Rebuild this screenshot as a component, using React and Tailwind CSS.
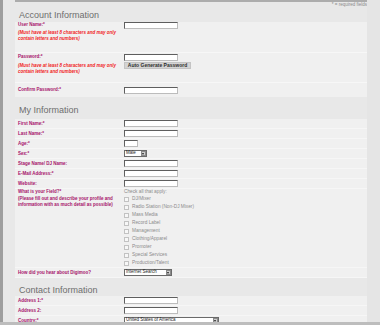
import React from 'react';

const LABEL = 'text-[4.5px] leading-[6px] font-bold text-[#a6106a] whitespace-nowrap';
const NOTE = 'text-[4.5px] leading-[6px] font-bold italic text-[#f01c24]';
const HEADING = 'text-[9px] leading-none text-[#6e6e6e] pl-[4px]';

const fields = [
  'DJ/Mixer',
  'Radio Station (Non-DJ Mixer)',
  'Mass Media',
  'Record Label',
  'Management',
  'Clothing/Apparel',
  'Promoter',
  'Special Services',
  'Production/Talent',
];

function TextBox({ small }) {
  return (
    <div
      className={`${small ? 'w-[14px]' : 'w-[54px]'} h-[7px] shrink-0 bg-white border border-[#5e5e5e] border-b-[#bcbcbc] border-r-[#bcbcbc]`}
    />
  );
}

function Select({ value, w }) {
  return (
    <div className={`${w} h-[7px] shrink-0 bg-white border border-[#6a6a6a] flex items-center justify-between`}>
      <span className="text-[4.5px] leading-none pl-[1px] text-[#1c1c1c] whitespace-nowrap">{value}</span>
      <span className="w-[5px] h-[5px] mr-[0.5px] bg-[#cfcfcf] border border-[#8a8a8a] flex items-center justify-center">
        <span className="w-0 h-0 border-l-[1.5px] border-r-[1.5px] border-t-[2px] border-l-transparent border-r-transparent border-t-[#222]" />
      </span>
    </div>
  );
}

function Row({ label, children }) {
  return (
    <div className="h-[10px] shrink-0 flex items-center border-b border-[#f6f6f6]">
      <div className={`w-[109px] pl-[3px] ${LABEL}`}>{label}</div>
      {children}
    </div>
  );
}

function App() {
  return (
    <div className="w-[380px] h-[325px] overflow-hidden bg-[#e8e8e8] flex flex-col font-['Liberation_Sans',Arial,sans-serif]">
      <div className="flex-1 flex overflow-hidden">
        <div className="w-[3px] shrink-0 bg-[#9e9e9e]" />
        <div className="w-[12px] shrink-0" />

        <div className="w-[352px] shrink-0 flex flex-col">
          <div className="h-[2px] shrink-0 bg-[#acacac]" />
          <div className="h-[6px] shrink-0 flex items-center justify-end">
            <span className="text-[4.5px] leading-none text-[#8a8a8a] whitespace-nowrap">* = required fields</span>
          </div>

          {/* Account Information */}
          <div className="h-[14px] shrink-0 flex items-center">
            <h2 className={HEADING}>Account Information</h2>
          </div>
          <div className="shrink-0 bg-[#f0f0f0]">
            <div className="h-[31px] flex border-b border-[#f7f7f7]">
              <div className="w-[109px] pl-[3px]">
                <div className={LABEL}>User Name:*</div>
                <p className={`${NOTE} mt-[2px]`}>
                  (Must have at least 8 characters and may only contain letters and numbers)
                </p>
              </div>
              <div>
                <TextBox />
              </div>
            </div>
            <div className="h-[30px] flex border-b border-[#f7f7f7]">
              <div className="w-[109px] pl-[3px] pt-[1px]">
                <div className={LABEL}>Password:*</div>
                <p className={`${NOTE} mt-[3px]`}>
                  (Must have at least 8 characters and may only contain letters and numbers)
                </p>
              </div>
              <div className="pt-[1px] flex flex-col gap-[1px]">
                <TextBox />
                <div className="w-[67px] h-[7px] bg-[#d4d4d4] border border-[#c4c4c4] flex items-center justify-center">
                  <span className="text-[5px] leading-none font-bold text-[#2e2e2e] whitespace-nowrap">
                    Auto Generate Password
                  </span>
                </div>
              </div>
            </div>
            <div className="h-[14px] flex items-center">
              <div className={`w-[109px] pl-[3px] ${LABEL}`}>Confirm Password:*</div>
              <TextBox />
            </div>
          </div>

          {/* My Information */}
          <div className="h-[22px] shrink-0 flex items-end pb-[4px]">
            <h2 className={HEADING}>My Information</h2>
          </div>
          <div className="shrink-0 bg-[#f0f0f0]">
            <Row label="First Name:*"><TextBox /></Row>
            <Row label="Last Name:*"><TextBox /></Row>
            <Row label="Age:*"><TextBox small /></Row>
            <Row label="Sex:*"><Select value="Male" w="w-[23px]" /></Row>
            <Row label="Stage Name/ DJ Name:"><TextBox /></Row>
            <Row label="E-Mail Address:*"><TextBox /></Row>
            <Row label="Website:"><TextBox /></Row>
            <div className="h-[79px] flex border-b border-[#f6f6f6]">
              <div className="w-[109px] pl-[3px]">
                <div className={LABEL}>What is your Field?*</div>
                <p className="text-[4.5px] leading-[6px] font-bold text-[#a6106a] mt-[1px]">
                  (Please fill out and describe your profile and information with as much detail as possible)
                </p>
              </div>
              <div className="flex flex-col">
                <div className="h-[7px] text-[4.75px] leading-[6px] text-[#8c8c8c]">Check all that apply:</div>
                {fields.map((f) => (
                  <div key={f} className="h-[8px] flex items-center gap-[3px]">
                    <span className="w-[5px] h-[5px] bg-[#f7f7f7] border border-[#c2c2c2]" />
                    <span className="text-[4.75px] leading-none text-[#8c8c8c] whitespace-nowrap">{f}</span>
                  </div>
                ))}
              </div>
            </div>
            <Row label="How did you hear about Digimoo?">
              <Select value="Internet Search" w="w-[48px]" />
            </Row>
          </div>

          {/* Contact Information */}
          <div className="h-[18px] shrink-0 flex items-end pb-[1px]">
            <h2 className={HEADING}>Contact Information</h2>
          </div>
          <div className="shrink-0 bg-[#f0f0f0]">
            <Row label="Address 1:*"><TextBox /></Row>
            <Row label="Address 2:"><TextBox /></Row>
            <Row label="Country:*"><Select value="United States of America" w="w-[95px]" /></Row>
          </div>
        </div>

        <div className="flex-1 bg-[#e5e5e5]" />
      </div>
      <div className="h-[3px] shrink-0 bg-[#bdbdbd]" />
    </div>
  );
}

export default App;
